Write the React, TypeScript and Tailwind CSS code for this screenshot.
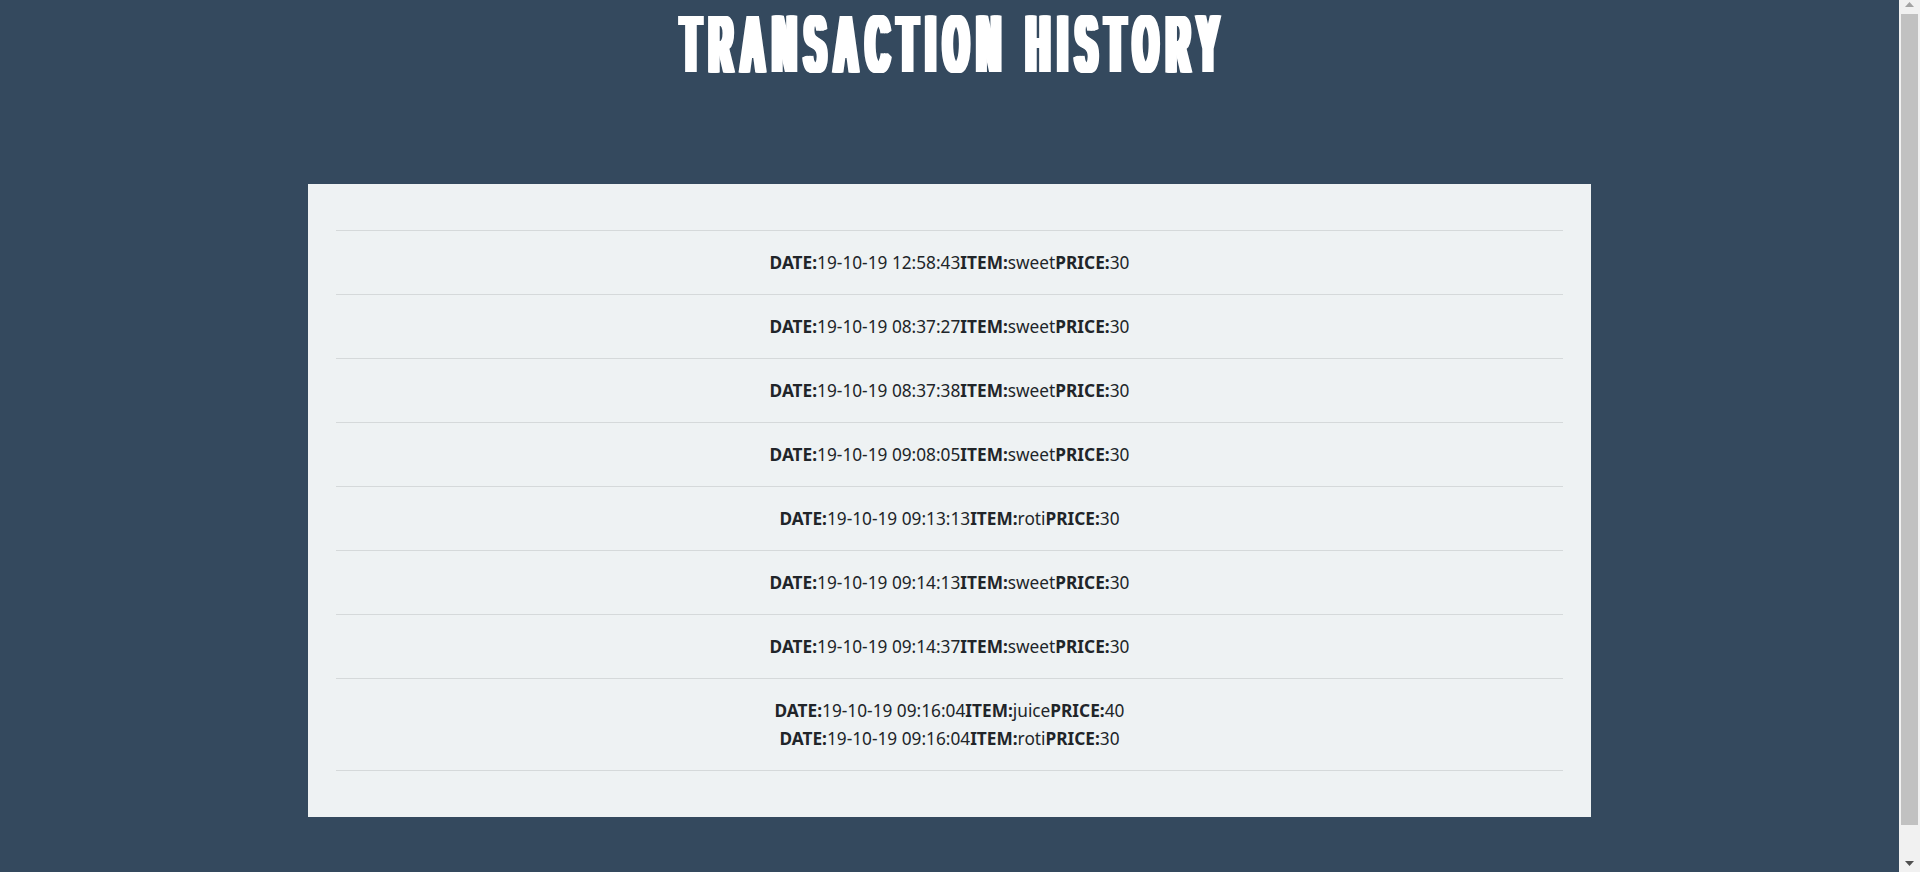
import React from "react";

type Tx = { date: string; item: string; price: string };

const rows: Tx[][] = [
  [{ date: "19-10-19 12:58:43", item: "sweet", price: "30" }],
  [{ date: "19-10-19 08:37:27", item: "sweet", price: "30" }],
  [{ date: "19-10-19 08:37:38", item: "sweet", price: "30" }],
  [{ date: "19-10-19 09:08:05", item: "sweet", price: "30" }],
  [{ date: "19-10-19 09:13:13", item: "roti", price: "30" }],
  [{ date: "19-10-19 09:14:13", item: "sweet", price: "30" }],
  [{ date: "19-10-19 09:14:37", item: "sweet", price: "30" }],
  [
    { date: "19-10-19 09:16:04", item: "juice", price: "40" },
    { date: "19-10-19 09:16:04", item: "roti", price: "30" },
  ],
];

function Line({ t }: { t: Tx }) {
  return (
    <div>
      <b className="font-bold">DATE:</b>
      {t.date}
      <b className="font-bold">ITEM:</b>
      {t.item}
      <b className="font-bold">PRICE:</b>
      {t.price}
    </div>
  );
}

function Scrollbar() {
  return (
    <div className="flex h-full w-[21px] shrink-0 flex-col bg-[#f1f1f1]">
      <div className="flex h-[14px] justify-center pt-[2px]">
        <svg width="9" height="5" viewBox="0 0 9 5">
          <polygon points="4.5,0 9,5 0,5" fill="#a3a3a3" />
        </svg>
      </div>
      <div className="mx-[2px] h-[811px] bg-[#c1c1c1]" />
      <div className="flex justify-center pt-[36px]">
        <svg width="9" height="5" viewBox="0 0 9 5">
          <polygon points="0,0 9,0 4.5,5" fill="#505050" />
        </svg>
      </div>
    </div>
  );
}

export default function App() {
  return (
    <div className="flex h-screen w-full overflow-hidden bg-[#34495e]">
      <main className="min-w-0 flex-1 overflow-hidden">
        <div className="mt-[3px] flex justify-center">
          <h1
            className="scale-x-[0.387] pl-[23px] text-[82px] leading-none font-bold whitespace-nowrap tracking-[22.7px] text-white [text-shadow:-9px_0_#fff,-7px_0_#fff,-5px_0_#fff,-3px_0_#fff,-1px_0_#fff,1px_0_#fff,3px_0_#fff,5px_0_#fff,7px_0_#fff,9px_0_#fff]"
            style={{ fontFamily: '"Liberation Sans", Arial, sans-serif' }}
          >
            TRANSACTION HISTORY
          </h1>
        </div>
        <section className="mx-auto mt-[99px] w-[1283px] bg-[#eef2f3] px-[28px] pt-[46px] pb-[46px]">
          <ul
            className="border-b border-[#d5d9da] text-center text-[17.25px] leading-[28px] text-[#212529]"
            style={{ fontFamily: '"Noto Sans", "Open Sans", sans-serif' }}
          >
            {rows.map((r, i) => (
              <li key={i} className="border-t border-[#d5d9da] pt-[18px] pb-[17px]">
                {r.map((t, j) => (
                  <Line key={j} t={t} />
                ))}
              </li>
            ))}
          </ul>
        </section>
      </main>
      <Scrollbar />
    </div>
  );
}
